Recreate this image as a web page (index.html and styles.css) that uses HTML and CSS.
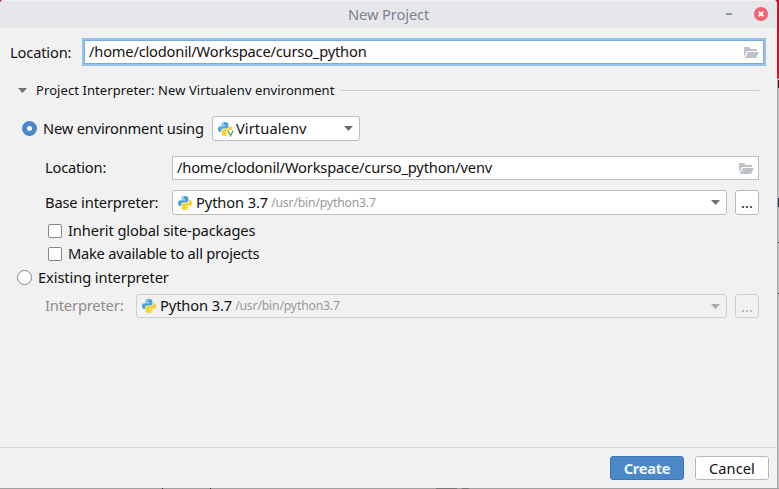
FILE: index.html
```html
<!DOCTYPE html>
<html lang="en">
<head>
<meta charset="utf-8">
<title>New Project</title>
<link rel="stylesheet" href="styles.css">
</head>
<body>
<svg class="defs" width="0" height="0">
  <symbol id="python" viewBox="0 0 14 14">
    <path fill="#4da3d2" d="M6.9 0C4.6 0 3.6.8 3.6 2.2V3.600H7.200V4.200H2.200C.8 4.200 0 5.200 0 7.100S.8 10 2.200 10H3.300V8.400C3.300 7.100 4.300 6.400 5.400 6.400H8.700C9.700 6.400 10.400 5.700 10.400 4.700V2.200C10.400.8 9.200 0 6.900 0ZM5.200 1.100A.7.700 0 1 1 5.200 2.500A.7.700 0 1 1 5.200 1.100Z"/>
    <path fill="#ffcf1f" d="M7.100 14C9.400 14 10.400 13.200 10.400 11.800V10.400H6.800V9.800H11.800C13.200 9.800 14 8.800 14 6.900S13.200 4 11.800 4H11.200V5.200C11.200 6.500 10.100 7.300 9 7.300H5.400C4.400 7.300 3.800 8.100 3.800 9V11.800C3.800 13.200 4.800 14 7.100 14ZM8.800 12.900A.7.700 0 1 1 8.800 11.500A.7.700 0 1 1 8.800 12.900Z"/>
  </symbol>
  <symbol id="folder" viewBox="0 0 15 11">
    <path fill="#bcc2c7" d="M0 0H5L6.500 2H13V4H3.200L0 9.800Z"/>
    <path fill="#bcc2c7" d="M4 5H15L12 11H.8Z"/>
  </symbol>
  <symbol id="arrow" viewBox="0 0 9 5"><path fill="currentColor" d="M0 0H9L4.500 5Z"/></symbol>
</svg>
<div class="desktop">
  <main class="dialog">
    <header class="titlebar">
      <h1>New Project</h1>
      <span class="minimize"></span>
      <svg class="close" viewBox="0 0 14 14"><circle cx="7" cy="7" r="7" fill="#f4606c"/><path d="M4.700 4.700L9.300 9.300M9.300 4.700L4.700 9.300" stroke="#fff" stroke-width="2"/></svg>
    </header>
    <div class="row main-location">
      <label>Location:</label>
      <div class="field focused"><span class="text">/home/clodonil/Workspace/curso_python</span><svg class="folder"><use href="#folder"/></svg></div>
    </div>
    <div class="row section">
      <svg class="arrow"><use href="#arrow"/></svg>
      <span class="heading">Project Interpreter: New Virtualenv environment</span>
      <span class="rule"></span>
    </div>
    <div class="row new-env">
      <span class="radio selected"></span>
      <span class="text">New environment using</span>
      <div class="combo tool"><span class="icon-venv"><svg class="python"><use href="#python"/></svg><svg class="vee" viewBox="0 0 6 6"><path d="M.7.500L3 5L5.300.500" fill="none" stroke="#59a84a" stroke-width="1.100"/></svg></span><span class="text venv">Virtualenv</span><svg class="arrow"><use href="#arrow"/></svg></div>
    </div>
    <div class="row sub env-location">
      <label class="text">Location:</label>
      <div class="field"><span class="text">/home/clodonil/Workspace/curso_python/venv</span><svg class="folder"><use href="#folder"/></svg></div>
    </div>
    <div class="row sub base">
      <label class="text">Base interpreter:</label>
      <div class="combo"><svg class="python"><use href="#python"/></svg><span class="text version">Python 3.7</span><span class="hint">/usr/bin/python3.7</span><svg class="arrow"><use href="#arrow"/></svg></div>
      <button class="more">...</button>
    </div>
    <div class="row check"><span class="box"></span><span class="text">Inherit global site-packages</span></div>
    <div class="row check all"><span class="box"></span><span class="text">Make available to all projects</span></div>
    <div class="row existing"><span class="radio"></span><span class="text">Existing interpreter</span></div>
    <div class="row sub interp">
      <label class="text">Interpreter:</label>
      <div class="combo"><svg class="python"><use href="#python"/></svg><span class="text version">Python 3.7</span><span class="hint">/usr/bin/python3.7</span><svg class="arrow"><use href="#arrow"/></svg></div>
      <button class="more">...</button>
    </div>
    <footer class="footer">
      <button class="primary">Create</button>
      <button class="cancel">Cancel</button>
    </footer>
  </main>
  <aside class="backdrop"></aside>
</div>
</body>
</html>
```

FILE: styles.css
```css
* { box-sizing: border-box; }
body { margin: 0; width: 779px; height: 489px; overflow: hidden; background: #a0a0a0; color: #111; font: 14.67px/20px "Noto Sans", sans-serif; letter-spacing: -.15px; }
.defs { position: absolute; }
.desktop { display: flex; width: 779px; height: 489px; background: linear-gradient(90deg, #a0a0a0 162px, #333 162px 163px, #a0a0a0 163px 210px, #333 210px 211px, #a0a0a0 211px 436px, #777 436px 457px, #a0a0a0 457px 462px, #777 462px 469px, #a0a0a0 469px) 0 488px / 779px 1px no-repeat, linear-gradient(#c9151e 0 79px, #a0a0a0 79px); }
.dialog { display: flex; flex-direction: column; width: 777px; height: 488px; background: #f1f1f1; border-radius: 4px 4px 0 0; overflow: hidden; }
.backdrop { width: 2px; height: 488px; border-left: 1px solid #a9a9a9; background: linear-gradient(#c9151e 0 79px, #f1f1f1 79px 80px, #5a1018 80px 88px, #c6c6c6 88px 198px, #26334a 198px 207px, #c6c6c6 207px 242px, #333 242px 243px, #c6c6c6 243px 293px, #333 293px 294px, #c6c6c6 294px); background-origin: border-box; }
.backdrop { border-image: linear-gradient(#c9151e 0 79px, #a9a9a9 79px) 1; border-width: 0 0 0 1px; border-style: solid; }
.titlebar { display: flex; align-items: center; height: 28px; flex: none; padding-right: 9px; box-shadow: inset 0 1px #f0f1f2; background: #e5e7eb; }
h1 { margin: 0 0 0 348px; padding-bottom: 1px; width: 378px; font-size: 14.67px; font-weight: 400; letter-spacing: -.1px; color: #7a8291; white-space: nowrap; }
.minimize { width: 6px; height: 2px; background: #9299a3; }
.close { width: 14px; height: 14px; margin-left: auto; }
.row { display: flex; align-items: center; flex: none; white-space: nowrap; }
.row > label, .row > span { flex: none; }
.text { padding-bottom: 2px; }
.main-location { height: 28px; margin: 10px 11px 0 10px; }
.main-location label { width: 72px; }
.field { display: flex; align-items: center; justify-content: space-between; flex: 1; height: 24px; padding: 0 4px; border: 1px solid #bebebe; background: #fff; }
.focused { height: 28px; padding: 0 5px 0 6px; border: 1px solid #97c3f3; outline: 1px solid #7ca9dc; outline-offset: -3px; box-shadow: inset 0 0 0 2px #97c3f3; letter-spacing: -.19px; }
.folder { width: 15px; height: 11px; flex: none; }
.focused .folder { margin-right: 1px; }
.arrow { width: 9px; height: 5px; flex: none; color: #6e6e6e; }
.section { height: 20px; margin: 14px 18px 0; font-size: 13px; letter-spacing: .08px; }
.heading { width: 299px; margin-left: 9px; }
.rule { flex: 1 !important; height: 1px; margin-left: 6px; background: #cdcdcd; }
.new-env { height: 25px; margin: 16px 0 0 22px; letter-spacing: -.19px; }
.new-env > .text { width: 160px; }
.radio { width: 15px; height: 15px; border: 1px solid #878787; border-radius: 50%; background: #fff; }
.radio.selected { border: 5px solid #4a88c7; }
.radio + span { margin-left: 6px; }
.combo { display: flex; align-items: center; flex: 1; height: 25px; padding: 0 6px 0 5px; border: 1px solid #bebebe; border-radius: 3px; background: #fff; }
.combo .arrow { margin-left: auto; }
.tool { flex: none; width: 148px; margin-left: 9px; }
.icon-venv { position: relative; width: 15px; height: 14px; }
.python { display: block; width: 14px; height: 14px; flex: none; }
.vee { position: absolute; right: -1px; bottom: -1px; width: 7px; height: 7px; background: #fff; }
.venv { margin-left: 3px; letter-spacing: .08px; }
.sub { margin: 0 18px 0 45px; }
.sub label { width: 127px; }
.env-location { height: 24px; margin-top: 15px; letter-spacing: -.17px; }
.base { height: 25px; margin-top: 10px; margin-bottom: 5px; }
.version { margin-left: 4px; letter-spacing: -.1px; }
.hint { margin-left: 3px; color: #999; font-size: 12.2px; letter-spacing: -.17px; }
button { display: flex; align-items: center; justify-content: center; width: 74px; height: 24px; padding: 0 0 1px; border: 1px solid #b9b9b9; border-radius: 3px; background: #fff; color: #111; font: inherit; }
.more { width: 24px; height: 25px; margin-left: 8px; }
.check { height: 22px; margin: 0 0 1px 48px; letter-spacing: -.11px; }
.check.all { letter-spacing: -.24px; }
.box { width: 14px; height: 14px; border: 1px solid #878787; border-radius: 2px; background: #fff; }
.check .box + span { margin-left: 6px; }
.existing { height: 23px; margin-left: 17px; letter-spacing: -.1px; }
.interp { height: 24px; margin-top: 5px; }
.interp label { width: 91px; color: #8c8c8c; }
.interp .combo, .interp .more { height: 24px; background: #f1f1f1; border-color: #cfcfcf; }
.interp .arrow, .interp .more { color: #aaa; }
.footer { display: flex; gap: 11px; justify-content: flex-end; height: 41px; margin-top: auto; padding: 8px 8px 0 0; border-top: 1px solid #d5d5d5; }
.footer .primary { border-color: #3d75b5; background: #4a88c7; color: #eef5fc; font-weight: 700; letter-spacing: -.3px; }
.footer .cancel { letter-spacing: .05px; }
```
